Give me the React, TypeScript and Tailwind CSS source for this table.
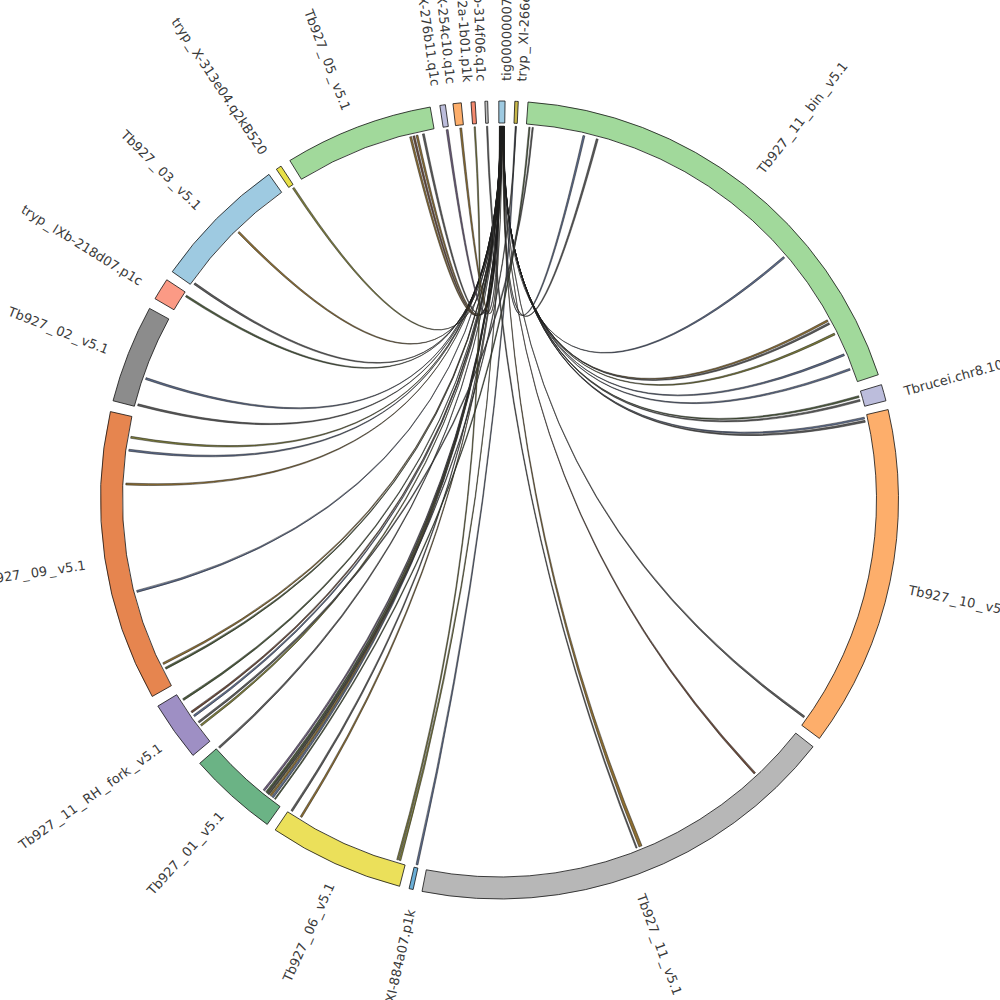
import React from "react";

const CX = 499.5;
const CY = 500;
const R_OUT = 399;
const R_IN = 377;
const R_CHORD = 374;
const R_LABEL = 419;

type Segment = { name: string; a0: number; a1: number; color: string };

const segments: Segment[] = [
  { name: "tig00000007", a0: -0.1, a1: 0.8, color: "#9ecae1" },
  { name: "tryp_XI-266e03.q1c", a0: 2.2, a1: 2.7, color: "#c9b84a" },
  { name: "Tb927_11_bin_v5.1", a0: 4.1, a1: 71.7, color: "#a1d99b" },
  { name: "Tbrucei.chr8.100k", a0: 73.2, a1: 75.6, color: "#bcbddc" },
  { name: "Tb927_10_v5.1", a0: 76.9, a1: 126.7, color: "#fdae6b" },
  { name: "Tb927_11_v5.1", a0: 128.2, a1: 191.2, color: "#b7b7b7" },
  { name: "tryp_XI-884a07.p1k", a0: 192.5, a1: 193.1, color: "#6baed6" },
  { name: "Tb927_06_v5.1", a0: 194.5, a1: 214.2, color: "#ebe05a" },
  { name: "Tb927_01_v5.1", a0: 215.6, a1: 228.7, color: "#6bb385" },
  { name: "Tb927_11_RH_fork_v5.1", a0: 230.2, a1: 238.9, color: "#9e8fc4" },
  { name: "Tb927_09_v5.1", a0: 240.5, a1: 282.8, color: "#e6854f" },
  { name: "Tb927_02_v5.1", a0: 284.4, a1: 298.7, color: "#8c8c8c" },
  { name: "tryp_IXb-218d07.p1c", a0: 300.3, a1: 303.5, color: "#fb9a85" },
  { name: "Tb927_03_v5.1", a0: 304.9, a1: 324.7, color: "#9ecae1" },
  { name: "tryp_X-313e04.q2kB520", a0: 326.0, a1: 326.8, color: "#e8e048" },
  { name: "Tb927_05_v5.1", a0: 328.3, a1: 350.0, color: "#a1d99b" },
  { name: "tryp_X-276b11.q1c", a0: 351.4, a1: 352.2, color: "#bcbddc" },
  { name: "tryp_X-254c10.q1c", a0: 353.3, a1: 354.5, color: "#fdae6b" },
  { name: "tryp_X-112a-1b01.p1k", a0: 355.9, a1: 356.5, color: "#f4896f" },
  { name: "tryp_IXb-314f06.q1c", a0: 357.9, a1: 358.3, color: "#bdbdbd" },
];

const inks = ["#8c6d31", "#7b7b3a", "#5b6a8a", "#4a5a3a", "#6b4a3a", "#5a5a5a", "#6a5a7a"];

// far ends of the chords that leave tig00000007
const hubTargets: [number, number][] = [
  [12.9, 2], [15.0, 5], [49.4, 2], [61.2, 0], [61.7, 5], [63.5, 1], [67.0, 2], [69.4, 2],
  [73.8, 3], [74.4, 5], [77.2, 2], [77.7, 5], [125.3, 5], [136.8, 4], [157.6, 0],
  [195.3, 1], [211.9, 0], [213.6, 5], [217.2, 2], [217.6, 0], [218.0, 1], [218.4, 3],
  [218.9, 6], [228.4, 5], [232.8, 1], [234.6, 2], [235.3, 4], [237.6, 3], [243.1, 3],
  [243.9, 0], [255.7, 2], [272.3, 0], [277.5, 2], [279.5, 1], [284.6, 5], [288.8, 2],
  [302.9, 3], [305.2, 5], [315.6, 0], [326.4, 1], [346.1, 0], [346.6, 4], [347.1, 0],
  [348.1, 5], [351.8, 6], [353.9, 0],
];

// chords between other segments
const others: [number, number, number, number, number][] = [
  [2.4, 2.55, 192.6, 192.9, 2],
  [2.5, 2.6, 218.1, 218.35, 5],
  [4.5, 4.7, 216.8, 217.0, 3],
  [5.0, 5.2, 233.4, 233.7, 5],
  [356.1, 356.3, 195.7, 195.95, 1],
  [358.0, 358.2, 158.4, 158.6, 5],
];

const pt = (a: number, r: number) => {
  const t = (a * Math.PI) / 180;
  return [r * Math.sin(t), -r * Math.cos(t)];
};

const ring = (a0: number, a1: number) => {
  const [x0, y0] = pt(a0, R_OUT);
  const [x1, y1] = pt(a1, R_OUT);
  const [x2, y2] = pt(a1, R_IN);
  const [x3, y3] = pt(a0, R_IN);
  const big = a1 - a0 > 180 ? 1 : 0;
  return `M${x0},${y0}A${R_OUT},${R_OUT} 0 ${big} 1 ${x1},${y1}L${x2},${y2}A${R_IN},${R_IN} 0 ${big} 0 ${x3},${y3}Z`;
};

const ribbon = (s0: number, s1: number, t0: number, t1: number) => {
  const r = R_CHORD;
  const [x0, y0] = pt(s0, r);
  const [x1, y1] = pt(s1, r);
  const [x2, y2] = pt(t0, r);
  const [x3, y3] = pt(t1, r);
  return `M${x0},${y0}A${r},${r} 0 0 1 ${x1},${y1}Q0,0 ${x2},${y2}A${r},${r} 0 0 1 ${x3},${y3}Q0,0 ${x0},${y0}Z`;
};

const chords = [
  ...hubTargets.map(([t, ink], i) => {
    const h = 0.72 - (i / (hubTargets.length - 1)) * 0.74;
    const w = t === 157.6 ? 0.5 : 0.3;
    return { d: ribbon(h, h + 0.02, t, t + w), fill: inks[ink] };
  }),
  ...others.map(([a, b, c, d, ink]) => ({ d: ribbon(a, b, c, d), fill: inks[ink] })),
];

// underscores in the source render wide, with a gap each side
const LabelText: React.FC<{ name: string }> = ({ name }) => {
  const parts = name.split("_");
  return (
    <>
      {parts[0]}
      {parts.slice(1).map((p, i) => (
        <React.Fragment key={i}>
          <tspan dx={2}>_</tspan>
          <tspan dx={2}>{p}</tspan>
        </React.Fragment>
      ))}
    </>
  );
};

const Label: React.FC<{ seg: Segment }> = ({ seg }) => {
  const mid = (seg.a0 + seg.a1) / 2;
  const left = ((mid % 360) + 360) % 360 > 180;
  return (
    <g transform={`rotate(${mid - 90}) translate(${R_LABEL})${left ? " rotate(180)" : ""}`}>
      <text
        dy=".68em"
        textAnchor={left ? "end" : "start"}
        fontSize={13}
        fill="#3a3a3a"
        style={{ fontFamily: '"DejaVu Sans", sans-serif' }}
      >
        <LabelText name={seg.name} />
      </text>
    </g>
  );
};

export default function App() {
  return (
    <div className="w-[1000px] h-[1000px] bg-white overflow-hidden">
      <svg width={1000} height={1000} viewBox="0 0 1000 1000" className="block">
        <g transform={`translate(${CX},${CY})`}>
          <g>
            {chords.map((c, i) => (
              <path key={i} d={c.d} fill={c.fill} stroke="#1c1c1c" strokeWidth={0.5} />
            ))}
          </g>
          <g>
            {segments.map((s) => (
              <path key={s.name} d={ring(s.a0, s.a1)} fill={s.color} stroke="#111" strokeWidth={0.8} />
            ))}
          </g>
          <g>
            {segments.map((s) => (
              <Label key={s.name} seg={s} />
            ))}
          </g>
        </g>
      </svg>
    </div>
  );
}
